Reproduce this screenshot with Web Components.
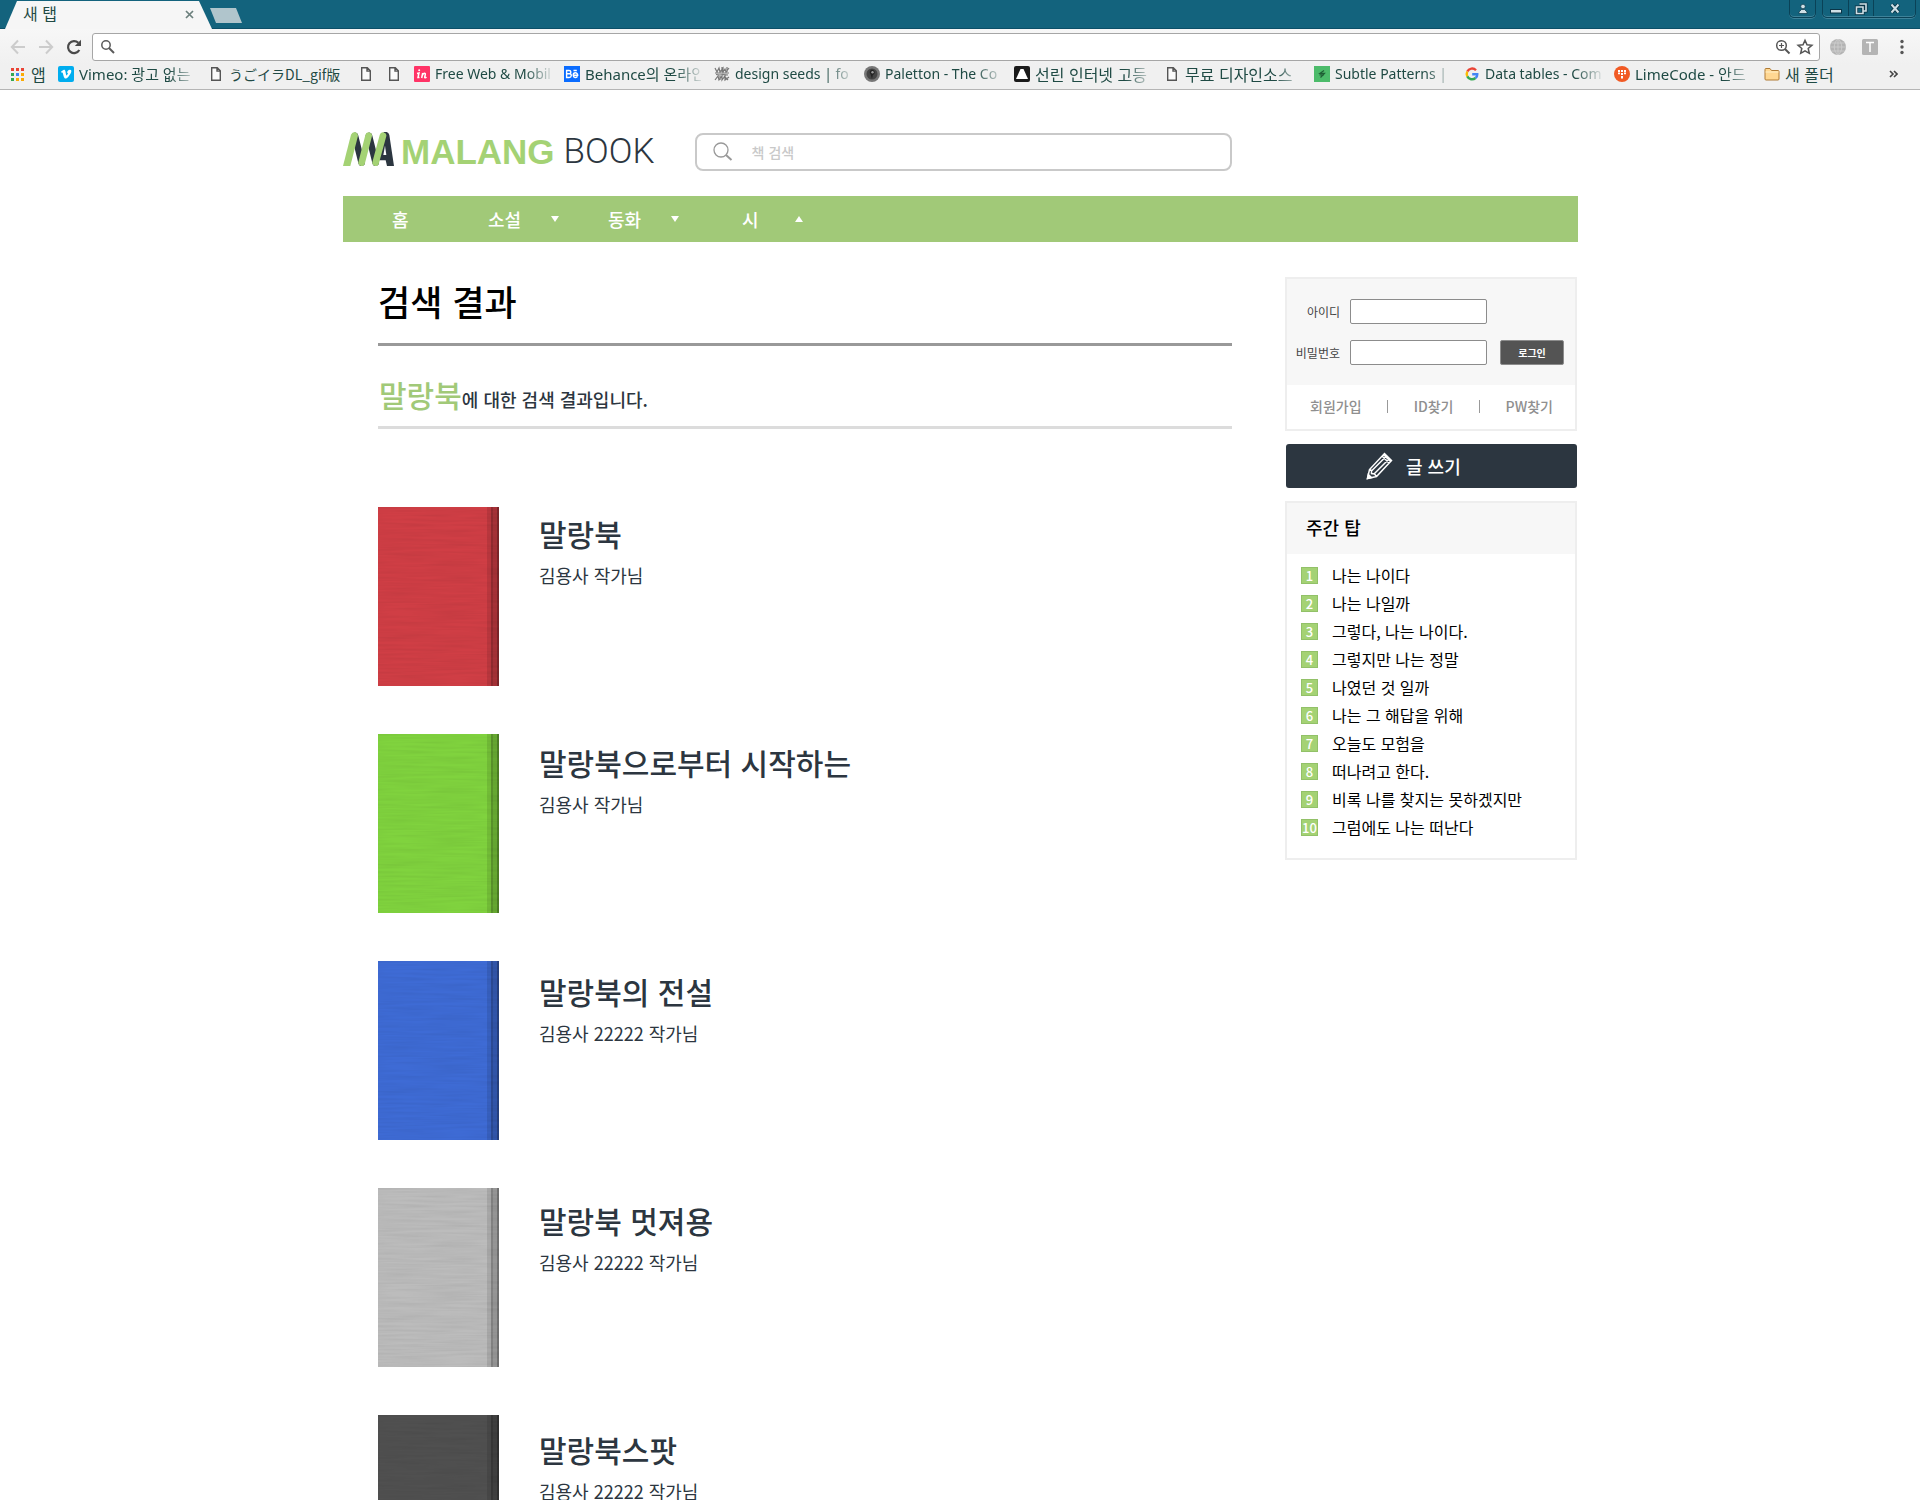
<!DOCTYPE html>
<html lang="ko">
<head>
<meta charset="utf-8">
<title>MALANG BOOK - 검색 결과</title>
<style>
  html, body { margin: 0; height: 100%; }
  body { font-family: "Noto Sans CJK KR", sans-serif; color: #2c3640; background: #fff; }
</style>
</head>
<body>
<browser-window>
  <book-header></book-header>
  <book-nav></book-nav>
  <search-page>
    <search-results keyword="말랑북"></search-results>
    <login-box slot="side"></login-box>
    <write-button slot="side">글 쓰기</write-button>
    <weekly-top slot="side" heading="주간 탑">
      <li>나는 나이다</li>
      <li>나는 나일까</li>
      <li>그렇다, 나는 나이다.</li>
      <li>그렇지만 나는 정말</li>
      <li>나였던 것 일까</li>
      <li>나는 그 해답을 위해</li>
      <li>오늘도 모험을</li>
      <li>떠나려고 한다.</li>
      <li>비록 나를 찾지는 못하겠지만</li>
      <li>그럼에도 나는 떠난다</li>
    </weekly-top>
  </search-page>
</browser-window>

<script>
const define = (name, render) => customElements.define(name, class extends HTMLElement {
  constructor() {
    super();
    this.attachShadow({ mode: 'open' });
  }
  connectedCallback() {
    this.shadowRoot.innerHTML = '<style>*{box-sizing:border-box}a{color:inherit;text-decoration:none}button,input{font:inherit}</style>' + render(this);
  }
});

/* ---------- browser chrome ---------- */

const docIcon = '<svg viewBox="0 0 16 16"><path d="M3.7 1.7h5.6l3 3v9.6H3.7z M9 1.9v3.2h3.2" fill="#fafafa" stroke="#555" stroke-width="1.4"/></svg>';

const bookmarks = [
  ['ko', 'Vimeo: 광고 없는', '<svg viewBox="0 0 16 16"><rect width="16" height="16" rx="2" fill="#00adef"/><path d="M3 5.8c1.2-1 2.2-2 3-2 1.600-.1 1.500 2.600 2.100 4.900.5 1.600 1.200.2 1.700-.9.3-.8 0-1.300-.9-.9C9.400 4.700 10.600 3.700 12 3.800c2.900.2.400 4.600-1.400 6.700-3 3.600-4.300 2-5.100-.8C4.900 7.500 4.800 5.700 3.600 6.700z" fill="#fff"/></svg>'],
  ['ja', 'うごイラDL_gif版', docIcon],
  ['ko', '', docIcon],
  ['ko', '', docIcon],
  ['en', 'Free Web &amp; Mobile', '<svg viewBox="0 0 16 16"><rect width="16" height="16" rx="1" fill="#ff3366"/><path d="M3 7.500l2-.5-1 4.500h1.500 M7.700 12l1-5M8.300 9.500c1-2.600 3.400-3 3-.9l-.6 2.600c0 .8.900.6 1.700-.3" fill="none" stroke="#fff" stroke-width="1.500"/><circle cx="5.200" cy="4.300" r="1" fill="#fff"/></svg>'],
  ['ko', 'Behance의 온라인', '<svg viewBox="0 0 16 16"><rect width="16" height="16" fill="#0a6cff"/><path d="M2.600 4.500h2.500c2.300 0 2.300 3 .3 3.300H2.600zm0 3.300h3c2.400.3 2.200 3.700-.5 3.700H2.600z M9 9.300h4.700c0-3.400-4.500-3.300-4.500 0 0 2.700 3.500 2.900 4.200 1M9.500 4.500h3.300" fill="none" stroke="#fff" stroke-width="1.400"/></svg>'],
  ['en', 'design seeds | fo', '<svg viewBox="0 0 16 16" fill="none" stroke="#777" stroke-width="1.200"><path d="M1 2l2 4 2-4 1 4 3-4v4l2-3 1 3 3-4M8 1v5M1 7h14M2 8.500l4 .5 3-.5 5 .5M1 14l3-4 1 4 3-4v4l3-4v4l4-3M6 10v4M10 10l4 4M13 1v5"/></svg>'],
  ['en', 'Paletton - The Co', '<svg viewBox="0 0 16 16"><circle cx="8" cy="8" r="8" fill="#777"/><circle cx="8" cy="8" r="5.500" fill="#444"/><path d="M8 3.800c3.200 0 3.600 4.700.9 5L8 13 6.500 8C5 6.500 6 3.800 8 3.800z" fill="#222"/><circle cx="8.500" cy="6.300" r="1.200" fill="#999"/></svg>'],
  ['ko', '선린 인터넷 고등', '<svg viewBox="0 0 16 16"><rect width="16" height="16" rx="2" fill="#1a1a1a"/><path d="M6.500 3h3L14 13H2z" fill="#fff"/></svg>'],
  ['ko', '무료 디자인소스', docIcon],
  ['en', 'Subtle Patterns |', '<svg viewBox="0 0 16 16"><rect width="16" height="16" fill="#4cbb6a"/><path d="M10 4.500L6 7.300h4.500L6.500 11.500M5.500 8.800H10" fill="none" stroke="#1f5e35" stroke-width="1.200"/></svg>'],
  ['en', 'Data tables - Com', '<svg viewBox="0 0 16 16" fill="none" stroke-width="2.400"><path d="M12 4.200A5.300 5.300 0 0 0 3.300 5.600" stroke="#ea4335"/><path d="M3.300 5.600a5.300 5.300 0 0 0 0 4.800" stroke="#fbbc05"/><path d="M3.300 10.400A5.300 5.300 0 0 0 11.500 12" stroke="#34a853"/><path d="M11.500 12c1.300-1.100 1.900-2.500 1.800-3.700H8.200" stroke="#4285f4"/></svg>'],
  ['ko', 'LimeCode - 안드', '<svg viewBox="0 0 16 16"><circle cx="8" cy="8" r="8" fill="#f15a24"/><path d="M4 4h2v2H4zM7 4h2v2H7zM10 4h2v2h-2zM7 7h2v2H7zM7 10h2v2.500H7zM4 6.600h2v1.600H4zM10 6.600h2v1.600h-2z" fill="#fff"/></svg>'],
  ['ko', '새 폴더', '<svg viewBox="0 0 16 16"><path d="M1 3.500q0-1 1-1h4l1.500 2H14q1 0 1 1V13q0 1-1 1H2q-1 0-1-1z" fill="#ffd792" stroke="#b07b35"/><path d="M1.500 6h13" stroke="#fff0c8"/></svg>']
];

define('bookmark-item', el => `
  <style>
    :host { display: block; flex: none; font: 16px/24px "Noto Sans CJK KR", sans-serif; }
    a { display: flex; align-items: center; gap: 5px; height: 24px; }
    .icon { width: 16px; height: 16px; }
    .icon ::slotted(svg) { display: block; width: 16px; height: 16px; }
    .text { width: 116px; overflow: hidden; white-space: nowrap; color: #1f4a44;
      mask-image: linear-gradient(90deg, #000 90px, transparent 120px); }
    :host([mixed]) { font: 15px/24px "Noto Sans", "Noto Sans CJK KR", sans-serif; }
    :host(:lang(en)) { font: 14px/24px "Noto Sans", sans-serif; }
    :host(:lang(ja)) { font: 14px/24px "Noto Sans CJK JP", sans-serif; }
    :host(:lang(ja)) .text, :host([short]) .text { mask-image: none; }
    :host([short]) .text { width: auto; }
    :host([bare]) { width: 15px; }
    :host([bare]) .text { display: none; }
  </style>
  <a href="#" aria-label="${el.title || '북마크'}"><span class="icon"><slot name="icon"></slot></span><span class="text"><slot></slot></span></a>`);

define('browser-tabs', () => `
  <style>
    :host { display: flex; justify-content: space-between; height: 29px; background: #13637d; border-bottom: 1px solid #0c4f68; }
    .left { display: flex; align-items: flex-start; padding-left: 5px; }
    .tab { display: flex; align-items: center; justify-content: space-between; width: 207px; height: 29px; padding: 0 18px 3px;
      clip-path: polygon(0 100%, 12px 1px, 194px 1px, 100% 100%); background: #f6f6f6; color: #1f4a44;
      font: 16px/24px "Noto Sans CJK KR", sans-serif; }
    .tab svg { width: 9px; height: 9px; margin-top: 3px; }
    .new { width: 32px; height: 15px; margin: 8px 0 0 -2px; padding: 0; border: 0; background: #b0c5cc; clip-path: polygon(0 0, 26px 0, 100% 100%, 6px 100%); }
    .right { display: flex; gap: 6px; padding-right: 4px; }
    .group { display: flex; height: 18px; border: 1px solid #0a4257; border-top: 0; border-radius: 0 0 5px 5px; box-shadow: 0 1px #3d8299, inset 0 -1px #3d8299; }
    .group button { display: grid; place-items: center; width: 25px; height: 16px; padding: 0; border: 0; background: none; }
    .group button + button { border-left: 1px solid #0a4257; }
    .group button:nth-child(3) { width: 42px; }
    .group svg { width: 14px; height: 13px; }
  </style>
  <div class="left">
    <div class="tab"><span>새 탭</span><svg viewBox="0 0 9 9"><path d="M1 1l7 7M8 1L1 8" stroke="#6b7f7c" stroke-width="1.700"/></svg></div>
    <button class="new" aria-label="새 탭 열기"></button>
  </div>
  <div class="right">
    <div class="group"><button aria-label="사용자"><svg viewBox="0 0 14 13"><circle cx="7" cy="4.500" r="2.300" fill="#cfe0e6" stroke="#0a3547" stroke-width=".7"/><path d="M3 11.500V10L5.500 7.500h3L11 10v1.500z" fill="#cfe0e6" stroke="#0a3547" stroke-width=".7"/></svg></button></div>
    <div class="group">
      <button aria-label="최소화"><svg viewBox="0 0 14 13"><rect x="1.500" y="7.500" width="11" height="3.500" fill="#cfe0e6" stroke="#0a3547"/></svg></button>
      <button aria-label="복원"><svg viewBox="0 0 14 13"><path d="M5.500 2h6.500v7H9.500M2.500 5h6.500v6.500H2.500z" fill="none" stroke="#0a3547" stroke-width="3.200"/><path d="M5.500 2h6.500v7H9.500M2.500 5h6.500v6.500H2.500z" fill="none" stroke="#cfe0e6" stroke-width="1.600"/></svg></button>
      <button aria-label="닫기"><svg viewBox="0 0 14 13"><path d="M3.500 2.500l7 8M10.500 2.500l-7 8" stroke="#0a3547" stroke-width="4"/><path d="M3.500 2.500l7 8M10.500 2.500l-7 8" stroke="#cfe0e6" stroke-width="2"/></svg></button>
    </div>
  </div>`);

define('browser-toolbar', () => `
  <style>
    :host { display: flex; align-items: center; height: 36px; padding: 0 9px; background: linear-gradient(#f7f7f7, #f0f0f0); }
    button { display: grid; place-items: center; width: 18px; height: 18px; padding: 0; border: 0; background: none; }
    svg { display: block; width: 18px; height: 18px; }
    .moves { display: flex; gap: 10px; }
    .address { flex: 1; display: flex; align-items: center; gap: 4px; height: 28px; margin: 0 9px; padding: 0 5px 0 7px; background: #fff; border: 1px solid #a6a6a6; border-radius: 3px; }
    .address input { flex: 1; min-width: 0; height: 24px; border: 0; outline: 0; background: none; font-size: 15px; }
    .ext { display: flex; gap: 14px; }
  </style>
  <div class="moves">
    <button aria-label="뒤로"><svg viewBox="0 0 18 18"><path d="M16 9H3M9 2.500L2.800 9 9 15.500" fill="none" stroke="#ccc" stroke-width="2"/></svg></button>
    <button aria-label="앞으로"><svg viewBox="0 0 18 18"><path d="M2 9h13M9 2.500L15.200 9 9 15.500" fill="none" stroke="#ccc" stroke-width="2"/></svg></button>
    <button aria-label="새로고침"><svg viewBox="0 0 18 18"><path d="M14.300 12A6 6 0 1 1 13.300 4.800" fill="none" stroke="#4a4a4a" stroke-width="2.200"/><path d="M16 1.800V8H9.800z" fill="#4a4a4a"/></svg></button>
  </div>
  <div class="address">
    <svg viewBox="0 0 18 18" fill="none" stroke="#5a5a5a"><circle cx="6" cy="7" r="4.200" stroke-width="1.500"/><path d="M9 10l5 5" stroke-width="2"/></svg>
    <input type="text" aria-label="주소">
    <button aria-label="확대"><svg viewBox="0 0 18 18" fill="none" stroke="#555"><circle cx="7.500" cy="7.500" r="4.800" stroke-width="1.500"/><path d="M11 11l4.500 4.500" stroke-width="2"/><path d="M5 7.500h5M7.500 5v5" stroke-width="1.200"/></svg></button>
    <button aria-label="북마크에 추가"><svg viewBox="0 0 18 18"><path d="M9 2.300l2 4.500 4.900.5-3.700 3.200 1.100 4.800L9 12.800l-4.300 2.500 1.100-4.800L2.100 7.300l4.900-.5z" fill="none" stroke="#555" stroke-width="1.500"/></svg></button>
  </div>
  <div class="ext">
    <button aria-label="지구본"><svg viewBox="0 0 18 18"><circle cx="9" cy="9" r="8" fill="#b4b4b4"/><path d="M1 9h16M2.500 5h13M2.500 13h13M9 1v16M9 1c-5 4-5 12 0 16M9 1c5 4 5 12 0 16" fill="none" stroke="#d0d0d0" stroke-width=".8"/></svg></button>
    <button aria-label="T"><svg viewBox="0 0 18 18"><rect x="1" y="1" width="16" height="16" rx="1.500" fill="#b4b4b4"/><path d="M5 4.500h8M9 4.500V14" stroke="#fff" stroke-width="1.500"/></svg></button>
    <button aria-label="메뉴"><svg viewBox="0 0 18 18" fill="#555"><circle cx="9" cy="3.500" r="1.700"/><circle cx="9" cy="9" r="1.700"/><circle cx="9" cy="14.500" r="1.700"/></svg></button>
  </div>`);

define('bookmark-bar', () => `
  <style>
    :host { display: flex; align-items: center; justify-content: space-between; height: 25px; padding: 0 22px 6px 10px; background: #f0f0f0; border-bottom: 1px solid #b5b5b5; }
    .items { display: flex; gap: 13px; }
    .items > :first-child { width: 35px; }
    button { padding: 0; border: 0; background: none; }
    button svg { display: block; width: 9px; height: 8px; }
  </style>
  <div class="items">
    <bookmark-item short><svg slot="icon" viewBox="0 0 16 16"><path d="M1 2h3v3H1zM6 2h3v3H6zM11 2h3v3h-3z" fill="#ea4335"/><path d="M1 7h3v3H1zM1 12h3v3H1z" fill="#34a853"/><path d="M6 7h3v3H6z" fill="#4285f4"/><path d="M11 7h3v3h-3zM6 12h3v3H6zM11 12h3v3h-3z" fill="#fbab05"/></svg>앱</bookmark-item>
    ${bookmarks.map(([lang, text, icon], i) => `<bookmark-item lang="${lang}" title="${text}" ${text ? '' : 'bare'} ${/[A-Z]/.test(text) ? 'mixed' : ''} ${i === bookmarks.length - 1 ? 'short' : ''}>${icon.replace('<svg', '<svg slot="icon"')}${text}</bookmark-item>`).join('')}
  </div>
  <button aria-label="더보기"><svg viewBox="0 0 9 8"><path d="M1 1l3 3-3 3M5 1l3 3-3 3" fill="none" stroke="#444" stroke-width="1.600"/></svg></button>`);

define('browser-window', () => `
  <style>
    :host { display: flex; flex-direction: column; height: 100vh; }
    header { flex: none; }
    .view { flex: 1; min-height: 0; overflow: auto; scrollbar-width: none; }
    .page { max-width: 1236px; margin: 0 auto; }
  </style>
  <header><browser-tabs></browser-tabs><browser-toolbar></browser-toolbar><bookmark-bar></bookmark-bar></header>
  <div class="view"><div class="page"><slot></slot></div></div>`);

/* ---------- site ---------- */

define('book-header', () => `
  <style>
    :host { display: flex; align-items: center; gap: 40px; padding: 43px 346px 25px 1px; }
    .logo { display: flex; align-items: center; flex: none; height: 38px; white-space: nowrap; }
    .logo svg { display: block; width: 51px; height: 34px; margin: 0 7px 7px 0; }
    b { color: #a4d274; font: bold 35px/38px "Liberation Sans", sans-serif; margin-right: 9px; }
    i { color: #2c3640; font: 300 35px/38px Roboto, sans-serif; }
    form { flex: 1; display: flex; align-items: center; height: 38px; padding: 0 17px 0 16px; border: 2px solid #c9c9c9; border-radius: 8px; gap: 19px; }
    form svg { flex: none; width: 20px; height: 20px; }
    input { flex: 1; min-width: 0; height: 30px; padding: 0; border: 0; outline: 0; font-size: 14px; font-weight: 500; }
    input::placeholder { color: #c9c9c9; opacity: 1; }
  </style>
  <a class="logo" href="#" aria-label="MALANG BOOK">
    <svg viewBox="0 0 153 102" fill="none" stroke-width="20">
      <path d="M36 12L56 92M78 12L98 92" stroke="#2c3640" stroke-linecap="round"/>
      <path d="M122 0h9q6 2 8 9l14 93h-21l-4-17h-22z" fill="#2c3640"/>
      <path d="M121 69l5-28 4 28z" fill="#fff"/>
      <path d="M0 102L24 8Q28 0 35 0 44 2 45 11L22 102z" fill="#a4d274"/>
      <path d="M77 11L56 92M120 11L98 92" stroke="#a4d274" stroke-linecap="round"/>
    </svg>
    <b>MALANG</b><i>BOOK</i>
  </a>
  <form role="search">
    <svg viewBox="0 0 20 20" fill="none" stroke="#999"><circle cx="8" cy="8" r="7" stroke-width="1.300"/><path d="M13 13l5.500 5" stroke-width="2"/></svg>
    <input type="search" aria-label="책 검색" placeholder="책 검색">
  </form>`);

define('book-nav', () => `
  <style>
    :host { display: block; margin-left: 1px; background: #a1c978; color: #fff; }
    nav { display: flex; height: 46px; padding-left: 49px; font-size: 18px; font-weight: 500; line-height: 46px; }
    a { display: flex; align-items: center; gap: 30px; }
    a:nth-child(1) { width: 96px; }
    a:nth-child(2) { width: 120px; }
    a:nth-child(3) { width: 134px; }
    a:nth-child(4) { gap: 36px; }
    svg { width: 8px; height: 6px; }
  </style>
  <nav>
    <a href="#">홈</a>
    <a href="#">소설<svg viewBox="0 0 8 6"><path d="M0 0h8L4 6z" fill="#fff"/></svg></a>
    <a href="#">동화<svg viewBox="0 0 8 6"><path d="M0 0h8L4 6z" fill="#fff"/></svg></a>
    <a href="#">시<svg viewBox="0 0 8 6"><path d="M0 6h8L4 0z" fill="#fff"/></svg></a>
  </nav>`);

define('search-page', () => `
  <style>
    :host { display: flex; align-items: flex-start; gap: 53px; padding: 35px 1px 0 36px; }
    main { flex: 1; min-width: 0; }
    aside { flex: none; width: 292px; }
  </style>
  <main><slot></slot></main>
  <aside><slot name="side"></slot></aside>`);

define('book-cover', el => `
  <style>
    :host { display: block; width: 121px; height: 179px; background: ${el.getAttribute('color')}; }
    svg { display: block; width: 100%; height: 100%; }
  </style>
  <svg viewBox="0 0 121 179">
    <filter id="linen" x="0" y="0" width="100%" height="100%"><feTurbulence type="fractalNoise" baseFrequency=".02 .4" numOctaves="2" seed="4"/><feColorMatrix values="0 0 0 0 0  0 0 0 0 0  0 0 0 0 0  .1 0 0 0 -.03"/></filter>
    <rect width="121" height="179" filter="url(#linen)"/>
    <path d="M109 0h4v179h-4z" opacity=".1"/><path d="M113 0h2v179h-2z" opacity=".3"/>
    <path d="M115 0h4v179h-4z" opacity=".2"/><path d="M119 0h2v179h-2z" opacity=".4"/>
  </svg>`);

const books = [
  ['#d03e45', '말랑북', '김용사 작가님'],
  ['#80d33e', '말랑북으로부터 시작하는', '김용사 작가님'],
  ['#3e6bd5', '말랑북의 전설', '김용사 22222 작가님'],
  ['#bcbcbc', '말랑북 멋져용', '김용사 22222 작가님'],
  ['#505050', '말랑북스팟', '김용사 22222 작가님']
];

define('search-results', el => `
  <style>
    :host { display: block; }
    h1 { margin: 0; padding-bottom: 18px; border-bottom: 3px solid #999; color: #000; font-size: 35px; font-weight: 500; line-height: 48px; }
    p { margin: 0; padding: 28px 0 7px 1px; border-bottom: 3px solid #dcdcdc; font-size: 18px; font-weight: 500; line-height: 40px; }
    em { color: #a1c978; font-size: 30px; font-style: normal; }
    .shelf { display: flex; gap: 40px; padding: 78px 0 60px; }
    .covers { display: flex; flex-direction: column; gap: 48px; }
    .titles { flex: 1; margin: 0; padding: 5px 0 0; list-style: none; }
    li { height: 229px; }
    h2 { margin: 0; font-size: 30px; font-weight: 500; line-height: 42px; }
    small { display: block; font-size: 18px; line-height: 42px; }
  </style>
  <h1>검색 결과</h1>
  <p><em>${el.getAttribute('keyword')}</em>에 대한 검색 결과입니다.</p>
  <div class="shelf">
    <div class="covers">${books.map(b => `<book-cover color="${b[0]}"></book-cover>`).join('')}</div>
    <ul class="titles">${books.map(b => `<li><h2><a href="#">${b[1]}</a></h2><small>${b[2]}</small></li>`).join('')}</ul>
  </div>`);

define('login-box', () => `
  <style>
    :host { display: block; margin-bottom: 13px; border: 2px solid #eee; }
    form { display: grid; grid-template-columns: 53px 137px 64px; column-gap: 10px; row-gap: 16px; padding: 20px 0; height: 106px; background: #f7f7f7; color: #444; }
    label { font-size: 12px; line-height: 25px; text-align: right; }
    input { width: 137px; height: 25px; padding: 0 4px; border: 1px solid #8c8c8c; border-radius: 2px; background: #fff; font-size: 12px; }
    button { grid-column: 3; margin-left: 3px; width: 64px; height: 25px; padding: 0; border: 1px solid #8c8c8c; border-radius: 2px; background: #545454; color: #fff; font-size: 10px; font-weight: bold; line-height: 22px; }
    nav { display: flex; align-items: center; justify-content: space-between; height: 44px; padding: 0 22px 2px 23px; color: #8f8f8f; font-size: 14px; font-weight: 500; }
    hr { width: 1px; height: 13px; margin: 0; border: 0; background: #999; }
  </style>
  <form>
    <label for="uid">아이디</label><input id="uid" type="text"><span></span>
    <label for="upw">비밀번호</label><input id="upw" type="password"><button type="button">로그인</button>
  </form>
  <nav><a href="#">회원가입</a><hr><a href="#">ID찾기</a><hr><a href="#">PW찾기</a></nav>`);

define('write-button', () => `
  <style>
    :host { display: block; margin: 0 0 13px 1px; }
    button { display: flex; align-items: center; gap: 13px; width: 100%; height: 44px; padding: 0 0 1px 80px; border: 0; border-radius: 3px; background: #2c3640; color: #fff; font-size: 18px; font-weight: 500; }
    svg { width: 27px; height: 28px; }
  </style>
  <button type="button"><svg viewBox="0 0 27 28" fill="none" stroke="#fff" stroke-width="1.500"><path d="M1.500 26.500L3.500 17.500 18.500 1.500 25.500 8.500 10.500 24.500zM3.500 17.500l2 1v3l3 .5 2 2.500M6 18.500L20 4.500M8.500 21.500L22.500 7.500M16 4l7 7M17.500 2.500l7 7"/><path d="M1.500 26.500l.8-4 3.200 3z" fill="#fff"/></svg><slot></slot></button>`);

define('weekly-top', el => `
  <style>
    :host { display: block; border: 2px solid #eee; color: #000; }
    h2 { margin: 0; padding: 0 19px 2px; background: #f7f7f7; font-size: 18px; font-weight: 500; line-height: 49px; }
    ol { margin: 0; padding: 8px 14px 16px; list-style: none; }
    li { display: flex; align-items: center; gap: 14px; height: 28px; padding-bottom: 1px; font-size: 16px; line-height: 27px; }
    span { display: grid; place-items: center; width: 17px; height: 17px; border: 1px solid #92c168; background: #a4d274; color: #fff; font-size: 13px; font-weight: 500; line-height: 15px; }
  </style>
  <h2>${el.getAttribute('heading')}</h2>
  <ol>${[...el.querySelectorAll('li')].map((li, i) => `<li><span>${i + 1}</span>${li.textContent}</li>`).join('')}</ol>`);
</script>
</body>
</html>
